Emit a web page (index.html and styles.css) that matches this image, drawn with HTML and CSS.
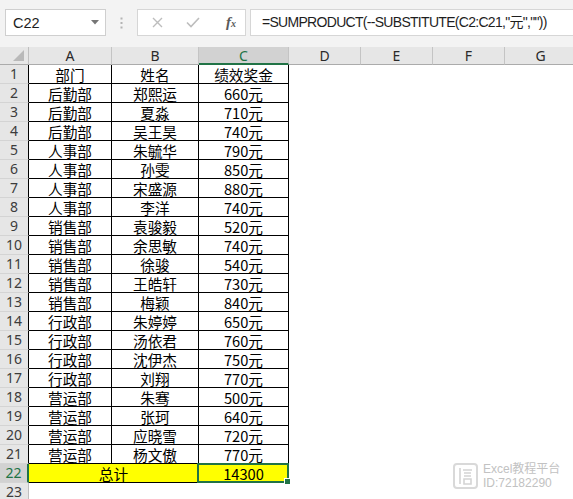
FILE: index.html
```html
<!DOCTYPE html>
<html lang="zh-CN">
<head>
<meta charset="utf-8">
<title>Excel</title>
<link rel="stylesheet" href="styles.css">
</head>
<body>
<div class="topbar">
  <div class="namebox">
    <span>C22</span>
    <svg class="dd" width="8" height="5" viewBox="0 0 8 5"><path d="M0 0 H8 L4 4.5 Z" fill="#767676"/></svg>
  </div>
  <div class="grip">
    <svg width="3" height="12" viewBox="0 0 3 12"><rect x="0.5" y="0.5" width="2" height="2" fill="#b4b4b4"/><rect x="0.5" y="5" width="2" height="2" fill="#b4b4b4"/><rect x="0.5" y="9.5" width="2" height="2" fill="#b4b4b4"/></svg>
  </div>
  <div class="fxbox">
    <svg class="ic-x" width="11" height="11" viewBox="0 0 11 11"><path d="M1 1 L10 10 M10 1 L1 10" stroke="#bdbdbd" stroke-width="1.4" fill="none"/></svg>
    <svg class="ic-ok" width="14" height="11" viewBox="0 0 14 11"><path d="M1 5.5 L5 9.5 L13 1" stroke="#bdbdbd" stroke-width="1.6" fill="none"/></svg>
    <span class="fx">f<small>x</small></span>
  </div>
  <div class="formula">=SUMPRODUCT(--SUBSTITUTE(C2:C21,"元",""))</div>
</div>

<div class="sheet">
  <div class="row hdr">
    <div class="rh corner"><svg width="11" height="11" viewBox="0 0 11 11"><path d="M11 0 V11 H0 Z" fill="#b9b9b9"/></svg></div>
    <div class="ch a">A</div>
    <div class="ch b">B</div>
    <div class="ch c sel-col">C</div>
    <div class="ch d">D</div>
    <div class="ch d">E</div>
    <div class="ch d">F</div>
    <div class="ch d">G</div>
  </div>

  <div class="row"><div class="rh in">1</div><div class="t a">部门</div><div class="t b">姓名</div><div class="t c">绩效奖金</div></div>
  <div class="row"><div class="rh in">2</div><div class="t a">后勤部</div><div class="t b">郑熙运</div><div class="t c">660元</div></div>
  <div class="row"><div class="rh in">3</div><div class="t a">后勤部</div><div class="t b">夏淼</div><div class="t c">710元</div></div>
  <div class="row"><div class="rh in">4</div><div class="t a">后勤部</div><div class="t b">吴王昊</div><div class="t c">740元</div></div>
  <div class="row"><div class="rh in">5</div><div class="t a">人事部</div><div class="t b">朱毓华</div><div class="t c">790元</div></div>
  <div class="row"><div class="rh in">6</div><div class="t a">人事部</div><div class="t b">孙雯</div><div class="t c">850元</div></div>
  <div class="row"><div class="rh in">7</div><div class="t a">人事部</div><div class="t b">宋盛源</div><div class="t c">880元</div></div>
  <div class="row"><div class="rh in">8</div><div class="t a">人事部</div><div class="t b">李洋</div><div class="t c">740元</div></div>
  <div class="row"><div class="rh in">9</div><div class="t a">销售部</div><div class="t b">袁骏毅</div><div class="t c">520元</div></div>
  <div class="row"><div class="rh in">10</div><div class="t a">销售部</div><div class="t b">余思敏</div><div class="t c">740元</div></div>
  <div class="row"><div class="rh in">11</div><div class="t a">销售部</div><div class="t b">徐骏</div><div class="t c">540元</div></div>
  <div class="row"><div class="rh in">12</div><div class="t a">销售部</div><div class="t b">王皓轩</div><div class="t c">730元</div></div>
  <div class="row"><div class="rh in">13</div><div class="t a">销售部</div><div class="t b">梅颖</div><div class="t c">840元</div></div>
  <div class="row"><div class="rh in">14</div><div class="t a">行政部</div><div class="t b">朱婷婷</div><div class="t c">650元</div></div>
  <div class="row"><div class="rh in">15</div><div class="t a">行政部</div><div class="t b">汤依君</div><div class="t c">760元</div></div>
  <div class="row"><div class="rh in">16</div><div class="t a">行政部</div><div class="t b">沈伊杰</div><div class="t c">750元</div></div>
  <div class="row"><div class="rh in">17</div><div class="t a">行政部</div><div class="t b">刘翔</div><div class="t c">770元</div></div>
  <div class="row"><div class="rh in">18</div><div class="t a">营运部</div><div class="t b">朱骞</div><div class="t c">500元</div></div>
  <div class="row"><div class="rh in">19</div><div class="t a">营运部</div><div class="t b">张珂</div><div class="t c">640元</div></div>
  <div class="row"><div class="rh in">20</div><div class="t a">营运部</div><div class="t b">应晓雪</div><div class="t c">720元</div></div>
  <div class="row"><div class="rh in">21</div><div class="t a">营运部</div><div class="t b">杨文傲</div><div class="t c">770元</div></div>
  <div class="row"><div class="rh in sel-row">22</div><div class="t ab yellow">总计</div><div class="t c yellow active">14300<span class="selbox"><span class="handle"></span></span></div></div>
  <div class="row"><div class="rh">23</div></div>
</div>

<div class="watermark">
  <svg width="25" height="26" viewBox="0 0 25 26">
    <rect x="1" y="1" width="23" height="24" rx="3" fill="none" stroke="#d9d9d9" stroke-width="2"/>
    <path d="M7 5 V21 M10 7 H19 M11 10 H18 M11 13 H18 M11 16 V21 H18 V16 Z" fill="none" stroke="#d4d4d4" stroke-width="1.6"/>
  </svg>
  <div class="wm-text">
    <span>Excel教程平台</span>
    <span>ID:72182290</span>
  </div>
</div>
</body>
</html>
```

FILE: styles.css
```css
* { box-sizing: border-box; }

body {
  margin: 0;
  width: 573px;
  height: 499px;
  overflow: hidden;
  background: #ffffff;
  position: relative;
  font-family: "Noto Sans CJK SC", "Noto Sans", sans-serif;
  color: #000;
}

/* formula bar */
.topbar {
  height: 47px;
  background: #f3f3f3;
  display: flex;
  align-items: flex-start;
  padding: 9px 0 0 5px;
}

.namebox {
  width: 101px;
  height: 27px;
  flex: none;
  background: #fff;
  border: 1px solid #cfcfcf;
  display: flex;
  align-items: center;
  justify-content: space-between;
  padding: 0 6px 0 7px;
  font-family: "Liberation Sans", sans-serif;
  font-size: 14.5px;
  color: #1e1e1e;
}

.grip {
  width: 31px;
  height: 27px;
  flex: none;
  display: flex;
  align-items: center;
  justify-content: center;
}

.fxbox {
  width: 109px;
  height: 27px;
  flex: none;
  background: #fff;
  border: 1px solid #d6d6d6;
  display: flex;
  align-items: center;
  padding-left: 14px;
}

.ic-x { margin-right: 23px; }
.ic-ok { margin-right: 26px; }

.fx {
  font-family: "Liberation Serif", serif;
  font-style: italic;
  font-weight: bold;
  font-size: 15px;
  color: #5a5a5a;
  line-height: 1;
}
.fx small { font-size: 10px; }

.formula {
  flex: 1;
  margin-left: 4px;
  height: 27px;
  background: #fff;
  border: 1px solid #d6d6d6;
  border-right: none;
  padding-left: 11px;
  line-height: 25px;
  font-family: "Liberation Sans", "Noto Sans CJK SC", sans-serif;
  font-size: 14px;
  letter-spacing: -0.7px;
  color: #1e1e1e;
  white-space: nowrap;
}

/* sheet grid */
.sheet {
  display: flex;
  flex-direction: column;
}

.row {
  display: flex;
  height: 19px;
  flex: none;
}

.row.hdr { height: 18px; }

.rh {
  width: 29px;
  flex: none;
  background: #e6e6e6;
  border-right: 1px solid #bfbfbf;
  border-bottom: 1px solid #d4d4d4;
  text-align: center;
  font-family: "Noto Sans", sans-serif;
  font-size: 14px;
  line-height: 18px;
  color: #3c3c3c;
}

.rh.in { border-right-color: #000; }

.rh.corner {
  border-bottom: 1px solid #ababab;
  display: flex;
  align-items: flex-end;
  justify-content: flex-end;
  padding: 0 4px 3px 0;
}

.rh.sel-row {
  background: #d2d2d2;
  color: #217346;
  border-right: 2px solid #217346;
}

.a { width: 83px; flex: none; }
.b { width: 87px; flex: none; }
.c { width: 90px; flex: none; }
.d { width: 72px; flex: none; }
.ab { width: 170px; flex: none; }

.ch {
  background: #e6e6e6;
  border-right: 1px solid #c4c4c4;
  border-bottom: 1px solid #ababab;
  text-align: center;
  font-family: "Noto Sans", sans-serif;
  font-size: 14px;
  line-height: 17px;
  color: #2a2a2a;
}

.ch.sel-col {
  background: #d2d2d2;
  color: #217346;
  border-bottom: 2px solid #217346;
}

.t {
  border-right: 1px solid #000;
  border-bottom: 1px solid #000;
  text-align: center;
  font-size: 14.67px;
  line-height: 18px;
  padding-top: 1px;
  white-space: nowrap;
}

.yellow { background: #ffff00; }

.active { position: relative; }

.selbox {
  position: absolute;
  left: -2px;
  right: -1px;
  top: -1px;
  bottom: -1px;
  border: 2px solid #217346;
}

.handle {
  position: absolute;
  right: -4px;
  bottom: -4px;
  width: 7px;
  height: 7px;
  background: #217346;
  border: 1px solid #fff;
}

/* watermark */
.watermark {
  position: absolute;
  left: 453px;
  top: 462px;
  display: flex;
  align-items: center;
  gap: 5px;
}

.wm-text {
  display: flex;
  flex-direction: column;
  font-family: "Liberation Sans", "Noto Sans CJK SC", sans-serif;
  font-size: 12px;
  line-height: 14px;
  color: #c2c2c2;
}
```
